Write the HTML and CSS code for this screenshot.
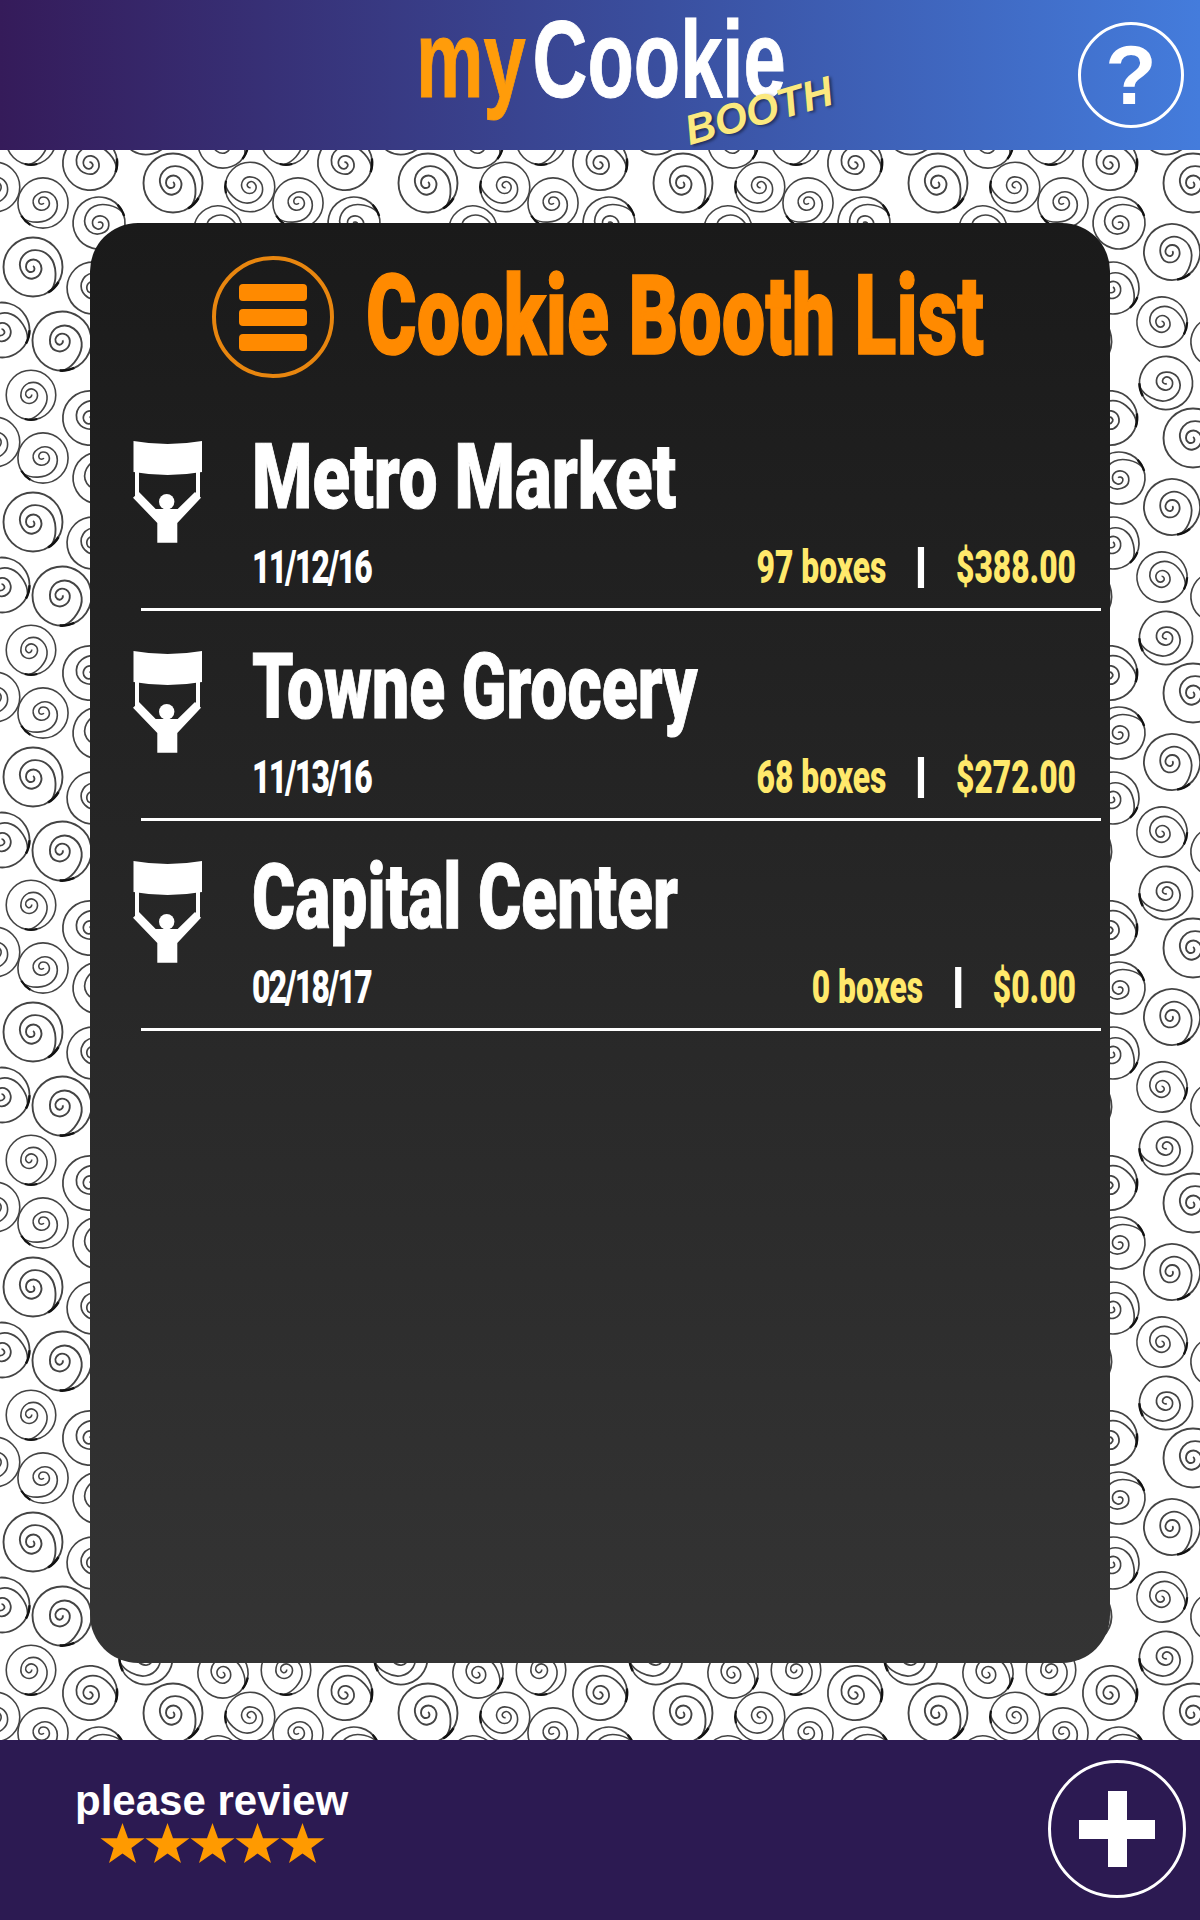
FILE: index.html
```html
<!DOCTYPE html>
<html lang="en">
<head>
  <meta charset="UTF-8">
  <title>myCookie Booth</title>
  <link rel="stylesheet" href="styles.css">
</head>
<body>

  <header class="topbar">
    <div class="logo">
      <div class="logo-word"><span class="logo-my">my</span><span class="logo-cookie">Cookie</span></div>
      <span class="logo-booth">BOOTH</span>
    </div>
    <div class="help">?</div>
  </header>

  <main class="swirls">
    <section class="card">
      <div class="card-head">
        <div class="menu-btn"><i></i><i></i><i></i></div>
        <h1>Cookie Booth List</h1>
      </div>

      <div class="booth">
        <svg class="booth-icon" viewBox="0 0 70 103"><use href="#sign"></use></svg>
        <div class="booth-info">
          <div class="booth-name name-wide">Metro Market</div>
          <div class="booth-meta">
            <span class="booth-date">11/12/16</span>
            <span class="booth-stat">97 boxes</span><i class="pipe"></i><span class="booth-stat">$388.00</span>
          </div>
        </div>
      </div>

      <div class="booth">
        <svg class="booth-icon" viewBox="0 0 70 103"><use href="#sign"></use></svg>
        <div class="booth-info">
          <div class="booth-name">Towne Grocery</div>
          <div class="booth-meta">
            <span class="booth-date">11/13/16</span>
            <span class="booth-stat">68 boxes</span><i class="pipe"></i><span class="booth-stat">$272.00</span>
          </div>
        </div>
      </div>

      <div class="booth">
        <svg class="booth-icon" viewBox="0 0 70 103"><use href="#sign"></use></svg>
        <div class="booth-info">
          <div class="booth-name">Capital Center</div>
          <div class="booth-meta">
            <span class="booth-date">02/18/17</span>
            <span class="booth-stat">0 boxes</span><i class="pipe"></i><span class="booth-stat">$0.00</span>
          </div>
        </div>
      </div>
    </section>
  </main>

  <footer class="bottombar">
    <div class="review">
      <div class="review-text">please review</div>
      <svg class="stars" viewBox="0 0 225 40">
        <defs><polygon id="star" points="22.5,0 28,15.3 44.5,15.3 31.4,25 36,40 22.5,30.6 9,40 13.6,25 0.5,15.3 17,15.3"></polygon></defs>
        <use href="#star"></use>
        <use href="#star" x="45"></use>
        <use href="#star" x="90"></use>
        <use href="#star" x="135"></use>
        <use href="#star" x="180"></use>
      </svg>
    </div>
    <div class="add-btn"><i></i></div>
  </footer>

  <svg class="sprites" width="0" height="0">
    <symbol id="sign" viewBox="0 0 70 103">
      <path d="M0.500 0 Q34.500 6 69 0 V31 Q34.500 37 0.500 31 Z"></path>
      <rect x="2" y="30" width="4" height="26"></rect>
      <rect x="63" y="30" width="4" height="26"></rect>
      <polygon points="0,56.700 6,51 22.700,68 44.700,68 62,51 68,56.700 44.300,82 44.300,101.700 24.300,101.700 24.300,82"></polygon>
      <circle cx="33.700" cy="60.700" r="7.700"></circle>
    </symbol>
  </svg>

</body>
</html>
```

FILE: styles.css
```css
* {
  box-sizing: border-box;
}

body {
  margin: 0;
  width: 1200px;
  height: 1920px;
  display: flex;
  flex-direction: column;
  overflow: hidden;
  font-family: Roboto, 'Liberation Sans', sans-serif;
}

.sprites {
  display: block;
  height: 0;
}

/* top bar */
.topbar {
  height: 150px;
  flex: none;
  display: flex;
  justify-content: space-between;
  align-items: flex-start;
  padding: 22px 16px 0 416px;
  background: linear-gradient(to right, #351b5a, #3a4f9f 55%, #447cdc);
}

.logo {
  position: relative;
  width: 420px;
  height: 100px;
  margin-top: -22px;
}

.logo-word {
  font-family: 'Liberation Sans', sans-serif;
  font-size: 110px;
  line-height: 118px;
  font-weight: bold;
  white-space: nowrap;
  transform: scaleX(.69);
  transform-origin: left top;
}

.logo-my {
  margin-right: 10px;
  color: #ff9c0a;
  -webkit-text-stroke: 1px #ff9c0a;
}

.logo-cookie {
  color: #fff;
  -webkit-text-stroke: 1px #fff;
}

.logo-booth {
  position: absolute;
  left: 267px;
  top: 86px;
  font-family: 'Liberation Sans', sans-serif;
  font-size: 42px;
  font-style: italic;
  font-weight: bold;
  line-height: 50px;
  color: #fbe97f;
  text-shadow: 2px 2px 3px rgba(0,0,0,0.45);
  transform: rotate(-16deg);
}

.help {
  width: 106px;
  height: 106px;
  border: 3px solid #fff;
  border-radius: 50%;
  text-align: center;
  font-family: 'Liberation Sans', sans-serif;
  font-size: 84px;
  line-height: 100px;
  font-weight: bold;
  color: #fff;
}

/* swirl wallpaper, one 255px tile */
.swirls {
  flex: 1;
  padding: 73px 90px 77px;
  background-color: #fff;
  background-position: 0 -150px;
  background-size: 255px 255px;
  background-image: url("data:image/svg+xml,%3Csvg xmlns='http://www.w3.org/2000/svg' width='255' height='255' viewBox='0 0 255 255'%3E%3Cdefs%3E%3Cg id='s' fill='none' stroke='%23444'%3E%3Ccircle r='29.500' stroke-width='1.900'/%3E%3Cpath stroke-width='1.900' d='M19 22C24 14 24-2 17-10C10-18-5-21-12-8C-16 2-8 13 0 11.500C8 10 11 1 6-5C1-10-7-7-7 0C-7 4-3 6 0 4.500C2 3.500 2 0 0-1'/%3E%3Cpath stroke='%23111' stroke-width='2.600' d='M15 25.500A29.500 29.500 0 0 0 25.500 15'/%3E%3C/g%3E%3C/defs%3E%3Cuse href='%23s' transform='translate(90 163) rotate(-40) scale(.92)'/%3E%3Cuse href='%23s' transform='translate(173 183)'/%3E%3Cuse href='%23s' transform='translate(250 187) rotate(135) scale(.84)'/%3E%3Cuse href='%23s' transform='translate(-5 187) rotate(135) scale(.84)'/%3E%3Cuse href='%23s' transform='translate(43 203) rotate(90) scale(.85)'/%3E%3Cuse href='%23s' transform='translate(99 223) rotate(-75) scale(.88)'/%3E%3Cuse href='%23s' transform='translate(218 230) rotate(-30) scale(.82)'/%3E%3Cuse href='%23s' transform='translate(152 252) rotate(20) scale(.95)'/%3E%3Cuse href='%23s' transform='translate(152 -3) rotate(20) scale(.95)'/%3E%3Cuse href='%23s' transform='translate(33 12)'/%3E%3Cuse href='%23s' transform='translate(33 267)'/%3E%3Cuse href='%23s' transform='translate(93 33) rotate(-10) scale(.88)'/%3E%3Cuse href='%23s' transform='translate(2 75) rotate(-30) scale(.93)'/%3E%3Cuse href='%23s' transform='translate(257 75) rotate(-30) scale(.93)'/%3E%3Cuse href='%23s' transform='translate(62 86) rotate(35)'/%3E%3Cuse href='%23s' transform='translate(142 67) rotate(-30) scale(.85)'/%3E%3Cuse href='%23s' transform='translate(196 87) rotate(-60) scale(.85)'/%3E%3Cuse href='%23s' transform='translate(146 128) rotate(120) scale(.9)'/%3E%3Cuse href='%23s' transform='translate(31 140) rotate(45) scale(.84)'/%3E%3Cuse href='%23s' transform='translate(223 143) rotate(-20) scale(.85)'/%3E%3C/svg%3E");
}

/* list card */
.card {
  height: 1440px;
  border-radius: 48px;
  background: linear-gradient(to bottom, #1a1a1a, #343434);
  padding-left: 43px;
}

.card-head {
  height: 178px;
  display: flex;
  align-items: flex-start;
  padding: 33px 0 0 79px;
}

.menu-btn {
  width: 122px;
  height: 122px;
  flex: none;
  border: 4px solid #e8860f;
  border-radius: 50%;
  display: flex;
  flex-direction: column;
  align-items: center;
  justify-content: center;
  gap: 8px;
}

.menu-btn i {
  width: 68px;
  height: 17px;
  border-radius: 4px;
  background: #ff8a00;
}

h1 {
  margin: 2px 0 0 32px;
  font-size: 112px;
  line-height: 116px;
  font-weight: 900;
  color: #ff8a00;
  white-space: nowrap;
  -webkit-text-stroke: 1.5px #ff8a00;
  transform: scaleX(.69);
  transform-origin: left top;
}

.booth {
  width: 960px;
  margin-left: 8px;
  height: 210px;
  display: flex;
  border-bottom: 3px solid #fff;
}

.booth-icon {
  width: 70px;
  height: 103px;
  flex: none;
  margin: 40px 0 0 -8px;
  fill: #fff;
}

.booth-info {
  flex: 1;
  min-width: 0;
  margin-left: 49px;
  padding-right: 25px;
}

.booth-name {
  height: 141px;
  padding-top: 26px;
  font-size: 91px;
  line-height: 100px;
  font-weight: 900;
  color: #fff;
  white-space: nowrap;
  -webkit-text-stroke: 1px #fff;
  transform: scaleX(.725);
  transform-origin: left top;
}

.name-wide {
  transform: scaleX(.758);
}

.booth-meta {
  width: calc(100% / .69);
  display: flex;
  align-items: center;
  gap: 46px;
  font-size: 46px;
  line-height: 50px;
  font-weight: 900;
  transform: scaleX(.69);
  transform-origin: left top;
}

.booth-date {
  margin-right: auto;
  letter-spacing: -2.5px;
  color: #fff;
}

.booth-stat {
  color: #ffe96b;
}

.pipe {
  width: 9px;
  height: 41px;
  background: #fff;
}

/* bottom bar */
.bottombar {
  height: 180px;
  flex: none;
  display: flex;
  justify-content: space-between;
  align-items: flex-start;
  padding: 20px 14px 0 75px;
  background: #2c1a52;
}

.review {
  padding-top: 18px;
}

.review-text {
  font-family: 'Liberation Sans', sans-serif;
  font-size: 42px;
  line-height: 46px;
  font-weight: bold;
  color: #fff;
}

.stars {
  display: block;
  width: 225px;
  height: 40px;
  margin: -1px 0 0 25px;
  fill: #ff9a00;
}

.add-btn {
  width: 138px;
  height: 138px;
  border: 3px solid #fff;
  border-radius: 50%;
  display: flex;
  align-items: center;
  justify-content: center;
}

.add-btn i {
  width: 76px;
  height: 76px;
  background:
    linear-gradient(#fff, #fff) center / 19px 76px no-repeat,
    linear-gradient(#fff, #fff) center / 76px 19px no-repeat;
}
```
